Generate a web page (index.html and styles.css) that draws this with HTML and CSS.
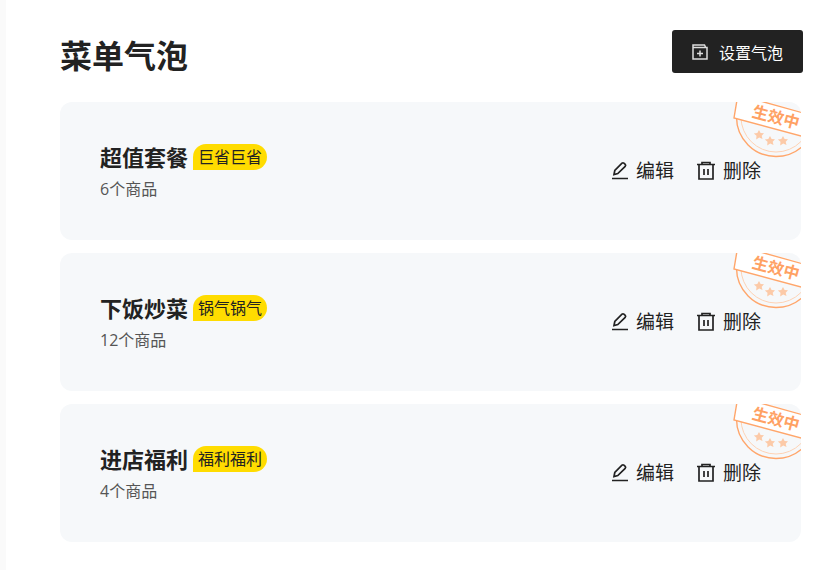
FILE: index.html
```html
<!DOCTYPE html>
<html lang="zh-CN">
<head>
    <meta charset="UTF-8">
    <meta name="viewport" content="width=device-width, initial-scale=1.0">
    <title>菜单气泡</title>
    <link rel="stylesheet" href="styles.css">
</head>
<body>
    <!-- 公用图形 -->
    <svg class="symbols" aria-hidden="true">
        <symbol id="icon-edit" viewBox="0 0 18 20">
            <path d="M3 13.500l.8-4 7.200-7.300q1-.8 1.900 0l1.300 1.200q.9 1 0 1.900l-7.400 7.300zM1 17.500h16" fill="none" stroke="#222" stroke-width="1.700"/>
        </symbol>
        <symbol id="icon-delete" viewBox="0 0 20 20">
            <path d="M1 3.500h18M6 3.500V1.500h8V3.500M3 4v14h14V4M8 8v6M12 8v6" fill="none" stroke="#222" stroke-width="1.700"/>
        </symbol>
        <symbol id="stamp" viewBox="0 0 68 56">
            <circle cx="43" cy="15" r="39.500" fill="none" stroke="#ffa66b" stroke-width="1.400"/>
            <circle cx="43" cy="15" r="35" fill="none" stroke="#fdd2b5" stroke-width="1"/>
            <path d="M5-8L1 16l80 21.500V4z" fill="#fff"/>
            <path d="M20-4L81 13V-4z" fill="#f6f8fa"/>
            <path d="M5-8L1 16l80 21.500M20-3L81 14" fill="none" stroke="#ffa66b" stroke-width="1.400"/>
            <g fill="#fccaa8">
                <path id="star" d="M26 28l1.600 3 3.400.2-2.300 2.500.8 3.400-3.300-1.500-3 1.800.3-3.600-2.700-2.300 3.500-.6z"/>
                <use href="#star" x="11" y="6"/>
                <use href="#star" x="24" y="6"/>
            </g>
        </symbol>
    </svg>

    <div class="page">
        <div class="header">
            <h1>菜单气泡</h1>
            <button class="set-btn" type="button">
                <svg width="16" height="16" viewBox="0 0 16 16" fill="none" stroke="#ddd" stroke-width="1.500">
                    <path d="M1 4V1h11.500l1.500 3M1 3.500h14V15H1zM8 6.500v6M5 9.500h6"/>
                </svg>
                设置气泡
            </button>
        </div>
        <ul class="list">
            <li class="card">
                <div class="info">
                    <h2>超值套餐<span class="bubble">巨省巨省</span></h2>
                    <p>6个商品</p>
                </div>
                <div class="actions">
                    <button type="button"><svg width="18" height="20"><use href="#icon-edit"/></svg>编辑</button>
                    <button type="button"><svg width="20" height="20"><use href="#icon-delete"/></svg>删除</button>
                </div>
                <svg class="stamp">
                    <use href="#stamp"/>
                    <text x="43" y="21" text-anchor="middle" transform="rotate(15 43 15)">生效中</text>
                </svg>
            </li>
            <li class="card">
                <div class="info">
                    <h2>下饭炒菜<span class="bubble">锅气锅气</span></h2>
                    <p>12个商品</p>
                </div>
                <div class="actions">
                    <button type="button"><svg width="18" height="20"><use href="#icon-edit"/></svg>编辑</button>
                    <button type="button"><svg width="20" height="20"><use href="#icon-delete"/></svg>删除</button>
                </div>
                <svg class="stamp">
                    <use href="#stamp"/>
                    <text x="43" y="21" text-anchor="middle" transform="rotate(15 43 15)">生效中</text>
                </svg>
            </li>
            <li class="card">
                <div class="info">
                    <h2>进店福利<span class="bubble">福利福利</span></h2>
                    <p>4个商品</p>
                </div>
                <div class="actions">
                    <button type="button"><svg width="18" height="20"><use href="#icon-edit"/></svg>编辑</button>
                    <button type="button"><svg width="20" height="20"><use href="#icon-delete"/></svg>删除</button>
                </div>
                <svg class="stamp">
                    <use href="#stamp"/>
                    <text x="43" y="21" text-anchor="middle" transform="rotate(15 43 15)">生效中</text>
                </svg>
            </li>
        </ul>
    </div>
</body>
</html>
```

FILE: styles.css
```css
* {
    padding: 0;
    margin: 0;
    box-sizing: border-box;
}
body {
    background: #fff;
    color: #222;
    font-family: "Open Sans", "Noto Sans CJK SC", sans-serif;
    font-size: 16px;
}
button {
    display: flex;
    align-items: center;
    border: none;
    background: none;
    color: inherit;
    font-family: inherit;
    cursor: pointer;
}
.symbols {
    position: absolute;
    width: 0;
    height: 0;
}
.page {
    min-height: 100vh;
    padding: 30px 25px 27px 54px;
    border-left: 6px solid #fafafa;
}
.header {
    display: flex;
    justify-content: space-between;
    align-items: flex-start;
    margin-bottom: 20px;
}
h1 {
    font-size: 32px;
    line-height: 52px;
}
.set-btn {
    gap: 11px;
    height: 43px;
    padding: 0 20px;
    border-radius: 3px;
    background: #222;
    color: #fff;
    font-size: 16px;
}
.list {
    display: flex;
    flex-direction: column;
    gap: 13px;
    padding-right: 2px;
    list-style: none;
}
.card {
    position: relative;
    display: flex;
    justify-content: space-between;
    align-items: center;
    padding: 35px 40px;
    border-radius: 12px;
    background: #f6f8fa;
    overflow: hidden;
}
h2 {
    display: flex;
    align-items: center;
    gap: 5px;
    font-size: 22px;
    line-height: 32px;
}
.bubble {
    padding: 0 5px;
    border-radius: 13px 13px 13px 0;
    background: #ffdc00;
    font-size: 16px;
    font-weight: normal;
    line-height: 26px;
}
.info {
    padding-top: 4px;
}
.info p {
    color: #555;
    line-height: 32px;
}
.actions {
    display: flex;
    gap: 22px;
}
.actions button {
    gap: 7px;
    font-size: 19px;
    line-height: 30px;
}
.stamp {
    position: absolute;
    top: 0;
    right: 0;
    width: 68px;
    height: 56px;
}
.stamp text {
    fill: #ffa163;
    font-size: 16px;
    font-weight: bold;
}
```
